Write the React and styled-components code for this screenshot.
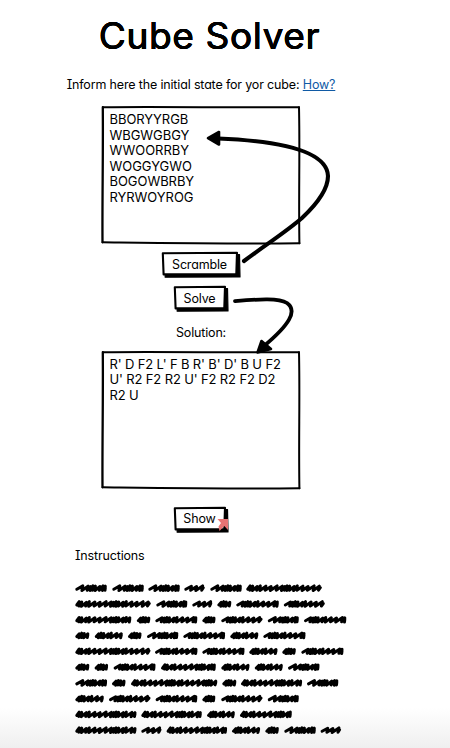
import React from "react";
import styled, { createGlobalStyle } from "styled-components";

const Global = createGlobalStyle`
  * { box-sizing: border-box; }
  body { margin: 0; background: #fff; }
`;

const Page = styled.main`
  position: relative;
  width: 450px;
  height: 748px;
  overflow: hidden;
  color: #000;
  background: linear-gradient(#fff 0, #fff 708px, #efefef 748px);
  font-family: Inter, "Liberation Sans", sans-serif;
  font-feature-settings: "cv11", "cv08";
  font-size: 12.5px;
  line-height: 15.6px;
  letter-spacing: -0.16px;
  white-space: nowrap;
`;

const Column = styled.div`
  display: flex;
  flex-direction: column;
  align-items: center;
  width: 402px;
`;

const Title = styled.h1`
  margin: 13px 0 0 17px;
  font-size: 37px;
  line-height: 46px;
  font-weight: 400;
  letter-spacing: 0.65px;
  text-shadow: 0.4px 0 #000, -0.4px 0 #000, 0 0.4px #000, 0 -0.4px #000;
`;

const Prompt = styled.p`
  margin: 18px 0 0;
  line-height: 16px;
`;

const Help = styled.a`
  color: #105aa5;
  text-decoration: underline;
`;

const Sketch = styled.svg`
  position: absolute;
  inset: 0;
  overflow: visible;
`;

const Panel = styled.div`
  position: relative;
  width: 198px;
  height: 138px;
  margin-top: ${(p) => p.$gap}px;
  padding: 6px 0 0 7.5px;
  font-size: 13px;
  letter-spacing: ${(p) => p.$track}px;
`;

const Line = styled.div`
  position: relative;
  height: 15.6px;
`;

const Button = styled.button`
  position: relative;
  display: block;
  width: ${(p) => p.$w}px;
  height: 25px;
  margin-top: ${(p) => p.$gap}px;
  padding: 0 3px 0 0;
  border: 0;
  background: none;
  color: inherit;
  font: inherit;
  font-feature-settings: inherit;
  letter-spacing: inherit;
`;

const Label = styled.span`
  position: relative;
`;

const Caption = styled.div`
  margin-top: 14px;
`;

const Heading = styled.h2`
  margin: 16px 0 0 75px;
  font-size: 12.5px;
  line-height: 16px;
  font-weight: 400;
`;

const Scribbles = styled.svg`
  display: block;
  margin: 17px 0 0 70px;
`;

const Overlay = styled.svg`
  position: absolute;
  inset: 0;
  pointer-events: none;
`;

function SketchPanel({ lines, gap, track }) {
  return (
    <Panel $gap={gap} $track={track}>
      <Sketch width="198" height="138" fill="none" stroke="#000" strokeLinecap="round" strokeLinejoin="round">
        <path d="M1 1.2 C60 0.4 130 1.8 197 1.2" strokeWidth="2" />
        <path d="M197 1.2 C198 45 196.6 90 197.4 137.3" strokeWidth="2" />
        <path d="M197.4 137.3 C130 138 60 137 0.6 136.3" strokeWidth="2.1" />
        <path d="M0.8 1.2 C1.2 50 0.2 90 0.5 136.3" strokeWidth="2.3" />
      </Sketch>
      {lines.map((l) => <Line key={l}>{l}</Line>)}
    </Panel>
  );
}

function SketchButton({ w, gap, children }) {
  return (
    <Button $w={w} $gap={gap}>
      <Sketch width={w} height="25" stroke="#000" strokeLinejoin="round">
        <path d={`M3 3 L${w - 0.5} 2.6 L${w} 25 L3.2 25.2 Z`} strokeWidth="1.2" />
        <path d={`M0.8 1.3 L${w - 3} 0.8 L${w - 3.7} 22 L1.6 22.4 Z`} fill="#fff" strokeWidth="2.1" />
      </Sketch>
      <Label>{children}</Label>
    </Button>
  );
}

const ROWS = [
  [[75, 107], [112, 144], [148, 180], [184, 205], [210, 242], [246, 322]],
  [[75, 151], [156, 187.5], [192, 212.5], [217, 231.5], [236, 279], [283.5, 325]],
  [[75, 131.5], [136.5, 150.5], [155, 197.5], [202, 215.7], [221, 262.7], [267.5, 299], [303.7, 346.5]],
  [[75, 89.5], [94.5, 123], [127.7, 141.7], [146.7, 178.5], [183, 225.3], [230, 258.5], [263, 305.7]],
  [[75, 150.7], [154.7, 197.7], [202, 244.7], [249, 277.7], [282, 296], [301, 343.7]],
  [[75, 89.5], [94.3, 108.3], [113.3, 155.7], [160.7, 216], [221, 249.7], [254.5, 283], [287.7, 319.7]],
  [[75, 107.3], [111.7, 125.7], [130.7, 217.5], [222, 236.5], [240.7, 302.3], [306.7, 338.5]],
  [[75, 104], [108.7, 150.7], [155.3, 197.5], [202, 215.5], [221, 262.7], [267.5, 299]],
  [[75, 136.7], [141, 202], [206.7, 235], [239.7, 292]],
  [[75, 136.7], [141, 161.7], [166.3, 227.3], [231.7, 260.3], [265, 279], [284, 316], [320.3, 341.3]],
];

// Horizontal steps between pen strokes; each kind of word starts at its own place in the cycle.
const STEPS = [6, 5.2, 2.5, 2.4, 2.5, 4.6, 3, 5.6, 5.2];

function startOf(length) {
  if (length < 17) return 2;
  if (length < 25) return 7;
  if (length < 30) return 2;
  if (length < 34) return 0;
  return length < 50 ? 1 : 3;
}

function scribble([a, b], y) {
  const end = b - 1.7;
  let x = a + 1.8;
  let d = `M${x} ${y + 1}`;
  let i = startOf(b - a);
  while (x < end - 1.6) {
    const s = Math.min(STEPS[i % STEPS.length], end - x);
    d += ` L${(x + s).toFixed(1)} ${(y - 2.3 + (i % 3) * 0.3).toFixed(1)} L${(x + s * 0.85).toFixed(1)} ${(y + 2.3 - (i % 2) * 0.3).toFixed(1)}`;
    x += s;
    i += 1;
  }
  return `${d} L${end} ${y - 0.5}`;
}

export default function App() {
  return (
    <Page>
      <Global />
      <Column>
        <Title>Cube Solver</Title>
        <Prompt>Inform here the initial state for yor cube: <Help>How?</Help></Prompt>
        <SketchPanel
          gap={13}
          track={-0.05}
          lines={["BBORYYRGB", "WBGWGBGY", "WWOORRBY", "WOGGYGWO", "BOGOWBRBY", "RYRWOYROG"]}
        />
        <SketchButton w={78} gap={8}>Scramble</SketchButton>
        <SketchButton w={54} gap={9}>Solve</SketchButton>
        <Caption>Solution:</Caption>
        <SketchPanel
          gap={10}
          track={-0.14}
          lines={["R' D F2 L' F B R' B' D' B U F2", "U' R2 F2 R2 U' F2 R2 F2 D2", "R2 U"]}
        />
        <SketchButton w={54} gap={18}>Show</SketchButton>
      </Column>
      <Heading>Instructions</Heading>
      <Scribbles width="290" height="160" viewBox="70 581 290 160" fill="none" stroke="#000" strokeWidth="3" strokeLinecap="round" strokeLinejoin="round">
        {ROWS.map((row, r) =>
          row.map((w, i) => <path key={`${r}-${i}`} d={scribble(w, 588.2 + r * 15.78)} />)
        )}
      </Scribbles>
      <Overlay width="450" height="748" fill="none" stroke="#000" strokeLinecap="round" strokeLinejoin="round">
        <path d="M244 261 C267 244 287 231 302 218 C318 203 328 189 328 176 C327 151 280 141 218 138.5" strokeWidth="4.1" />
        <path d="M208 138.2 L219 132 L219 144.5 Z" fill="#000" strokeWidth="2.6" />
        <path d="M235 301.2 C260 299 279 298 287 303 C298 311 289 325 264 346" strokeWidth="3.8" />
        <path d="M257.5 352.5 L261.5 341 L271 349 Z" fill="#000" strokeWidth="2.6" />
        <path d="M217.5 519 H228 V530 L224.3 526 L219.5 531 L218.5 526.5 L221 523 Z" fill="#e87373" stroke="none" />
      </Overlay>
    </Page>
  );
}
